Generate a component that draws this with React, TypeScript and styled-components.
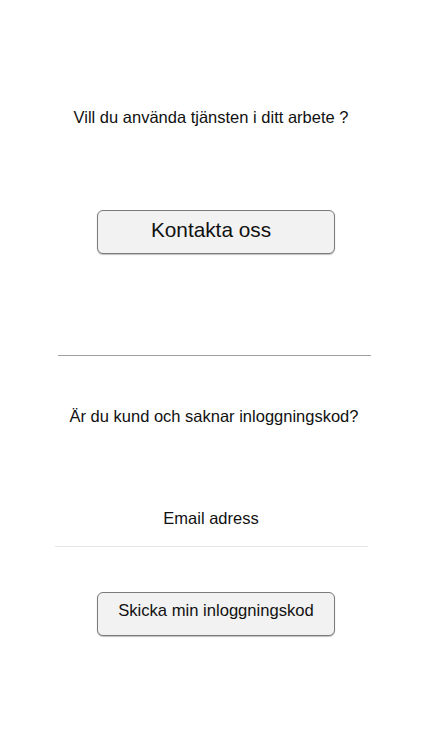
import React from 'react'
import styled, { createGlobalStyle } from 'styled-components'

const Global = createGlobalStyle`
  body {
    margin: 0;
    background: #ffffff;
    font-family: "Liberation Sans", Arial, Helvetica, sans-serif;
    color: #111111;
  }
`

const App = () => {
  return (
    <Page>
      <Global />
      <Question top={107} shift={0}>Vill du använda tjänsten i ditt arbete ?</Question>
      <Button top={83} size={20.8} align="center" pad="0 10px 5px 0">
        Kontakta oss
      </Button>
      <Divider />
      <Question top={50} shift={6}>Är du kund och saknar inloggningskod?</Question>
      <EmailField>
        <EmailInput placeholder="Email adress" />
      </EmailField>
      <Button top={45} size={16.6} align="flex-start" pad="8px 0 0 0">
        Skicka min inloggningskod
      </Button>
    </Page>
  )
}

export default App

const Page = styled.div`
  width: 422px;
  height: 750px;
  display: flex;
  flex-direction: column;
  align-items: center;
`

const Question = styled.div<{ top: number; shift: number }>`
  margin-top: ${(p) => p.top}px;
  margin-left: ${(p) => p.shift}px;
  font-size: 16.5px;
  line-height: 20px;
  text-align: center;
`

const Button = styled.button<{ top: number; size: number; align: string; pad: string }>`
  margin-top: ${(p) => p.top}px;
  margin-left: 10px;
  width: 238px;
  height: 44px;
  box-sizing: border-box;
  border: 1px solid #7a7a7a;
  border-radius: 6px;
  background: #f2f2f2;
  box-shadow: 0 1px 1px rgba(0, 0, 0, 0.25);
  font-family: "Liberation Sans", Arial, sans-serif;
  font-size: ${(p) => p.size}px;
  color: #111111;
  display: flex;
  justify-content: center;
  align-items: ${(p) => p.align};
  padding: ${(p) => p.pad};
  cursor: pointer;
`

const Divider = styled.div`
  margin-top: 101px;
  margin-left: 7px;
  width: 313px;
  height: 1px;
  background: #a0a0a0;
`

const EmailField = styled.div`
  margin-top: 76px;
  width: 313px;
  height: 44px;
  border-bottom: 1px solid #e6e6e6;
  display: flex;
  align-items: center;
`

const EmailInput = styled.input`
  width: 100%;
  border: none;
  outline: none;
  background: transparent;
  text-align: center;
  font-family: "Liberation Sans", Arial, sans-serif;
  font-size: 16.5px;
  color: #111111;
  padding: 0 0 12px 0;

  &::placeholder {
    color: #111111;
  }
`
